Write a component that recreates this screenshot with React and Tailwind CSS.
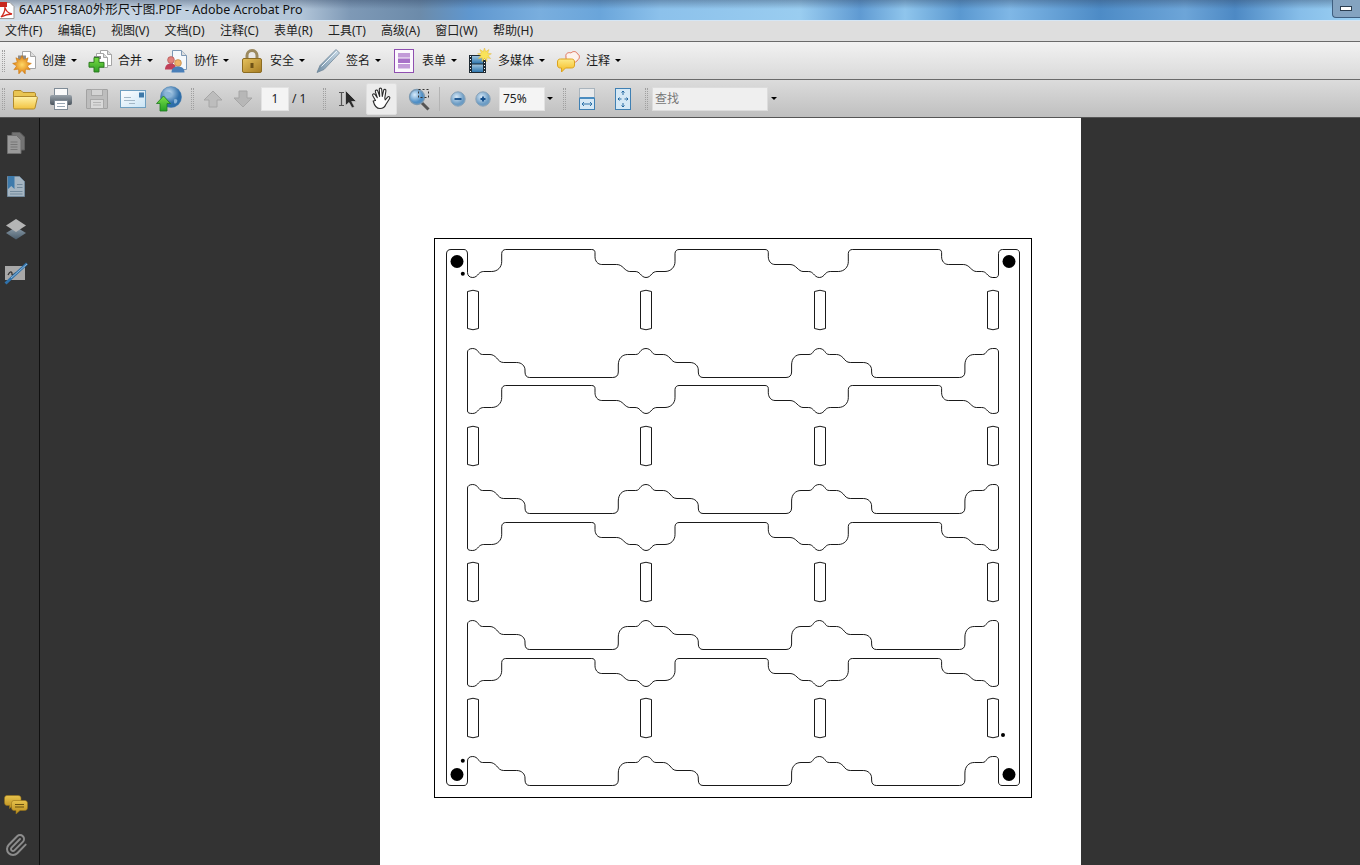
import React from "react";
import { Paperclip } from "lucide-react";

const Svg = ({ w, h, children }) => (
  <svg width={w} height={h} viewBox={`0 0 ${w} ${h}`} className="block shrink-0">{children}</svg>
);
const star = (cx, cy, r1, r2, n) => {
  const p = [];
  for (let i = 0; i < n * 2; i++) {
    const r = i % 2 ? r2 : r1;
    const t = (Math.PI * i) / n - Math.PI / 2;
    p.push(`${(cx + r * Math.cos(t)).toFixed(1)},${(cy + r * Math.sin(t)).toFixed(1)}`);
  }
  return p.join(" ");
};
const Doc = ({ x, y, w, h, f = 5, fill = "#fff", stroke = "#a5a5a5" }) => (
  <g>
    <path d={`M${x} ${y}h${w - f}l${f} ${f}v${h - f}h-${w}z`} fill={fill} stroke={stroke} />
    <path d={`M${x + w - f} ${y}v${f}h${f}`} fill="#ddd" stroke={stroke} />
  </g>
);

const Create = () => (
  <Svg w={24} h={26}>
    <defs><radialGradient id="sun1"><stop offset="0" stopColor="#ffd866" /><stop offset="1" stopColor="#dd7d10" /></radialGradient></defs>
    <Doc x={10.5} y={3.5} w={13} h={17} />
    <path d="M6 7.5h8v4H6z" fill="#8d8d8d" />
    <path d="M7 11v4" stroke="#8d8d8d" strokeWidth="2" />
    <polygon points={star(10, 17, 9.5, 5.5, 9)} fill="url(#sun1)" stroke="#c9760f" strokeWidth=".5" />
  </Svg>
);
const Merge = () => (
  <Svg w={24} h={26}>
    <defs><linearGradient id="gr1" x1="0" y1="0" x2="0" y2="1"><stop offset="0" stopColor="#79dd42" /><stop offset="1" stopColor="#2f9e26" /></linearGradient></defs>
    <Doc x={12.5} y={2.5} w={11} h={15} f={4} />
    <Doc x={8.5} y={5.5} w={11} h={14} f={4} />
    <path d="M6 8h7v3H6z" fill="#8d8d8d" />
    <path d="M7.5 11h5v5h5v5h-5v5h-5v-5h-5v-5h5z" fill="url(#gr1)" stroke="#2b7a1f" transform="translate(-1.5 -1) scale(1 .96)" />
  </Svg>
);
const Collab = () => (
  <Svg w={24} h={26}>
    <Doc x={8.5} y={2.5} w={14} h={19} fill="#f6f9fc" stroke="#7d98b5" />
    <circle cx="7" cy="12" r="3.4" fill="#e0807b" stroke="#a94a4a" strokeWidth=".6" />
    <path d="M1 21.5c0-4 2.5-6 6-6s5 2 5 6z" fill="#bf3f58" />
    <circle cx="14" cy="15" r="3.4" fill="#eeb36a" stroke="#b57a35" strokeWidth=".6" />
    <path d="M7.5 24.5c0-4 2.5-6 6.5-6s6.5 2 6.5 6z" fill="#4a7fb8" />
  </Svg>
);
const Lock = () => (
  <Svg w={24} h={26}>
    <defs><linearGradient id="gold" x1="0" y1="0" x2="1" y2="1"><stop offset="0" stopColor="#e6c25e" /><stop offset="1" stopColor="#a57b22" /></linearGradient></defs>
    <path d="M7 11V7.500a5 5 0 0 1 10 0V11" fill="none" stroke="#9c8a60" strokeWidth="3" />
    <rect x="2.500" y="10.500" width="19" height="14" rx="1.500" fill="url(#gold)" stroke="#8c6c22" />
    <rect x="10.500" y="15" width="3" height="5" fill="#6d5116" />
  </Svg>
);
const Pen = () => (
  <Svg w={24} h={26}>
    <defs><linearGradient id="penb" x1="0" y1="0" x2="1" y2="0"><stop offset="0" stopColor="#6f8ca3" /><stop offset="1" stopColor="#c9dbe8" /></linearGradient></defs>
    <path d="M20 1.500l3.500 3.500L8 21.500 1 24.500l3-7z" fill="url(#penb)" stroke="#6f8597" strokeWidth=".8" />
    <path d="M5.500 18.500 21 3" stroke="#edf4f9" />
  </Svg>
);
const Form = () => (
  <Svg w={24} h={26}>
    <rect x="2.500" y="1.500" width="19" height="23" fill="#fbf8fd" stroke="#8f4fb0" />
    <rect x="6" y="5" width="12" height="4.500" fill="#c29ad8" />
    <rect x="6" y="10.500" width="12" height="4.500" fill="#a871c8" />
    <rect x="6" y="16" width="12" height="4.500" fill="#c29ad8" />
  </Svg>
);
const Film = () => (
  <Svg w={24} h={26}>
    <defs><linearGradient id="fb" x1="0" y1="0" x2="0" y2="1"><stop offset="0" stopColor="#9fc6e0" /><stop offset="1" stopColor="#2f76ad" /></linearGradient></defs>
    <rect x="1" y="7" width="17" height="18" fill="#1e2a33" />
    <rect x="4" y="8" width="11" height="7.500" fill="url(#fb)" />
    <rect x="4" y="16.500" width="11" height="7.500" fill="url(#fb)" />
    <path d="M2 8.500h1M2 11.500h1M2 14.500h1M2 17.500h1M2 20.500h1M2 23.500h1M16 8.500h1M16 11.500h1M16 14.500h1M16 17.500h1M16 20.500h1M16 23.500h1" stroke="#fff" />
    <polygon points={star(16.5, 7, 7, 3.6, 9)} fill="#f9e35a" stroke="#e2b73a" strokeWidth=".5" />
  </Svg>
);
const Note = () => (
  <Svg w={24} h={26}>
    <defs><linearGradient id="yb" x1="0" y1="0" x2="0" y2="1"><stop offset="0" stopColor="#fdeb8a" /><stop offset="1" stopColor="#f4b91d" /></linearGradient></defs>
    <path d="M10 9c-1-4 3-5 5-4 2-2.500 6-1.500 6.500 1 2.500.5 2.500 5 0 6-1 3-5 2.500-6 1.500-3 1-6-1.500-5.500-4.500z" fill="#fdf2ec" stroke="#e0745c" />
    <path d="M4.500 11h11c2 0 3 1 3 3v3c0 2-1 3-3 3h-6l-4 4v-4h-1c-2 0-3-1-3-3v-3c0-2 1-3 3-3z" fill="url(#yb)" stroke="#dca21c" />
  </Svg>
);

const Folder = () => (
  <Svg w={26} h={24}>
    <defs><linearGradient id="fo" x1="0" y1="0" x2="0" y2="1"><stop offset="0" stopColor="#fff2a8" /><stop offset="1" stopColor="#f1c23f" /></linearGradient></defs>
    <path d="M1.500 5c0-1 .5-1.500 1.500-1.500h6l2 2h11c1 0 1.500.5 1.500 1.500v3h-22z" fill="#e9c552" stroke="#b08a2c" />
    <path d="M3 9.500h21c1 0 1.500.5 1.300 1.500l-2.300 10c-.2.800-.6 1-1.500 1H3c-1 0-1.500-.5-1.500-1.500V11c0-1 .5-1.500 1.500-1.500z" fill="url(#fo)" stroke="#b08a2c" />
  </Svg>
);
const Printer = () => (
  <Svg w={24} h={24}>
    <defs><linearGradient id="pr" x1="0" y1="0" x2="0" y2="1"><stop offset="0" stopColor="#9aa3ab" /><stop offset="1" stopColor="#4b555e" /></linearGradient></defs>
    <rect x="5.500" y="1.500" width="13" height="8" fill="#fafafa" stroke="#7f8b96" />
    <rect x="1" y="8" width="22" height="10" rx="2" fill="url(#pr)" />
    <rect x="5.500" y="13.500" width="13" height="9" fill="#fff" stroke="#7f8b96" />
    <path d="M8 16.500h8M8 19.500h8" stroke="#9aa8b5" />
  </Svg>
);
const Save = () => (
  <Svg w={24} h={24}>
    <path d="M2 2.500h20a.5.5 0 0 1 .5.500v18a.5.5 0 0 1-.5.500H2a.5.5 0 0 1-.5-.500V3a.5.5 0 0 1 .5-.500z" fill="#bdbdbd" stroke="#a2a2a2" />
    <rect x="6.500" y="2.500" width="11" height="6" fill="#d3d3d3" stroke="#a8a8a8" />
    <rect x="5.500" y="12.500" width="13" height="9" fill="#d9d9d9" stroke="#a8a8a8" />
    <path d="M8 15.500h8M8 18h8" stroke="#b4b4b4" />
  </Svg>
);
const Mail = () => (
  <Svg w={26} h={24}>
    <defs><linearGradient id="ml" x1="0" y1="0" x2="1" y2="1"><stop offset="0" stopColor="#ffffff" /><stop offset="1" stopColor="#c9e4f5" /></linearGradient></defs>
    <rect x=".5" y="3.500" width="25" height="17" fill="url(#ml)" stroke="#6f9fc0" />
    <rect x="19" y="5.500" width="5" height="5" fill="#3d78a8" />
    <path d="M4 10.500h7M4 13.500h11M9 16.500h6" stroke="#a3b7c6" />
  </Svg>
);
const Globe = () => (
  <Svg w={26} h={26}>
    <defs>
      <radialGradient id="gl" cx=".4" cy=".3"><stop offset="0" stopColor="#c5def2" /><stop offset="1" stopColor="#2e6da8" /></radialGradient>
      <linearGradient id="ga" x1="0" y1="0" x2="0" y2="1"><stop offset="0" stopColor="#7de14a" /><stop offset="1" stopColor="#24a024" /></linearGradient>
    </defs>
    <circle cx="15" cy="11" r="10.500" fill="url(#gl)" stroke="#3f79ad" strokeWidth=".5" />
    <path d="M9 6c3-1 6 0 7 2s-2 3-4 4-3-3-3-6zM19 13c2 0 3 1 2 3s-3 2-3 0 0-3 1-3z" fill="#8ab4d8" />
    <path d="M7 10l7 7.500h-3.500V25h-7v-7.500H0z" fill="url(#ga)" stroke="#1f7a1f" strokeWidth=".8" transform="translate(.5 0)" />
  </Svg>
);
const UpA = ({ d }) => (
  <Svg w={20} h={20}>
    <path d={d ? "M6 2h8v7h5l-9 9-9-9h5z" : "M10 2l9 9h-5v7H6v-7H1z"} fill={d ? "#b7b7b7" : "#bdbdbd"} stroke="#a6a6a6" />
  </Svg>
);
const Cursor = () => (
  <Svg w={20} h={22}>
    <path d="M2 4.500h5M2 17.500h5M4.500 4.500v13" stroke="#555" strokeWidth="1.200" fill="none" />
    <path d="M8.500 2.500v15l3.500-3 3 5.500 2.500-1.300-2.800-5.200h4.800z" fill="#2a2a2a" stroke="#d0d0d0" strokeWidth=".7" />
  </Svg>
);
const Hand = () => (
  <Svg w={24} h={24}>
    <path d="M5.500 13.500 2.800 8.800c-.9-1.700 1.200-2.700 2.200-1.300l2.300 3.200L5.400 4.800c-.5-1.800 1.800-2.500 2.400-.7l1.900 5.400-.4-7c-.1-1.900 2.300-1.900 2.400 0l.6 6.900 1.300-5.900c.4-1.800 2.600-1.300 2.300.5l-1.100 7 .4 2 2.400-2.800c1.300-1.500 3 0 1.900 1.500l-3.700 5.800c-1.100 2.900-2.900 4-5.800 4-3.600 0-5.400-2-6.800-7.500z" fill="#fff" stroke="#2a2a2a" strokeWidth="1.100" strokeLinejoin="round" />
  </Svg>
);
const Marquee = () => (
  <Svg w={23} h={24}>
    <defs><radialGradient id="lens" cx=".35" cy=".35"><stop offset="0" stopColor="#d8ebfa" /><stop offset="1" stopColor="#4f8fc6" /></radialGradient></defs>
    <path d="M13 15l7.500 7.500" stroke="#555" strokeWidth="3" />
    <circle cx="9" cy="10" r="7.500" fill="url(#lens)" stroke="#7c9ab3" strokeWidth="1.300" />
    <rect x="10.500" y="2.500" width="10" height="8" fill="none" stroke="#333" strokeDasharray="2 2" />
  </Svg>
);
const Zoomer = ({ id, plus }) => (
  <Svg w={16} h={16}>
    <defs><radialGradient id={id} cx=".4" cy=".35"><stop offset="0" stopColor="#d4e6f5" /><stop offset="1" stopColor="#6c9cc4" /></radialGradient></defs>
    <circle cx="8" cy="8" r="7.200" fill={`url(#${id})`} stroke="#8aa3b8" />
    {plus ? <path d="M5.500 8h5M8 5.500v5" stroke="#134d8a" strokeWidth="1.800" /> : <path d="M4.500 8h7" stroke="#134d8a" strokeWidth="1.800" />}
  </Svg>
);
const FitW = () => (
  <Svg w={16} h={22}>
    <rect x=".5" y=".5" width="15" height="10" fill="#e8eaec" stroke="#a9b4bd" />
    <rect x=".5" y="10.500" width="15" height="11" fill="#d6e8f5" stroke="#3f80b3" />
    <rect x=".5" y="9" width="15" height="2" fill="#4a8cc0" />
    <path d="M3 16h10M3 16l2-2M3 16l2 2M13 16l-2-2M13 16l-2 2" stroke="#2e72a8" fill="none" />
  </Svg>
);
const FitP = () => (
  <Svg w={16} h={22}>
    <rect x=".5" y=".5" width="15" height="21" fill="#d5e8f5" stroke="#3f80b3" />
    <path d="M8 3v4M6.500 4.500 8 3l1.500 1.500M8 19v-4M6.500 17.500 8 19l1.500-1.500M3 11h3.500M4.500 9.500 3 11l1.500 1.500M13 11H9.500M11.500 9.500 13 11l-1.500 1.500" stroke="#2468a0" fill="none" />
  </Svg>
);
const PdfIcon = () => (
  <Svg w={15} h={18}>
    <path d="M-3 1.500h13l4 4v12H-3z" fill="#fff" stroke="#9a9a9a" />
    <rect x="-3" y="1" width="10" height="5" fill="#c8281e" />
    <path d="M1 16c2-2 4-6 4-10 .5 3 3 6 7 7-3 0-7 1-11 3z" fill="none" stroke="#cf2a20" strokeWidth="1.300" />
  </Svg>
);

const Pages = () => (
  <Svg w={18} h={22}>
    <path d="M5 .5h8l4.500 4.500v13H5z" fill="#747474" stroke="#5f5f5f" />
    <path d="M.5 3.500h9l4.500 4.500v13.500H.5z" fill="#9a9a9a" stroke="#6f6f6f" />
    <path d="M3.500 10h7M3.500 12.500h7M3.500 15h7M3.500 17.500h7" stroke="#777" />
  </Svg>
);
const Bookmarks = () => (
  <Svg w={18} h={22}>
    <path d="M.5 1.500h12l5 5v15H.5z" fill="#a5b5c2" stroke="#72899c" />
    <path d="M1 1h6.500v13l-3.200-3-3.300 3z" fill="#3d7aab" />
    <path d="M10 9.500h5.500M10 12.500h5.500M3 16.500h12.500M3 19h12.500" stroke="#738a9c" />
  </Svg>
);
const Layers = () => (
  <Svg w={20} h={22}>
    <defs><linearGradient id="ly" x1="0" y1="0" x2="0" y2="1"><stop offset="0" stopColor="#8fa0ad" /><stop offset="1" stopColor="#4a5c6b" /></linearGradient></defs>
    <path d="M10 9l10 6-10 6.500L0 15z" fill="url(#ly)" />
    <path d="M10 1l10 6.500L10 14 0 7.500z" fill="#b5b5b5" />
  </Svg>
);
const Signs = () => (
  <Svg w={24} h={24}>
    <rect x="1" y="5" width="20" height="14" fill="#a8a8a8" />
    <path d="M4 14c2-4 4-4 4-1s3-2 5-1" stroke="#333" strokeWidth="1.300" fill="none" />
    <path d="M1.500 22.500 23 2.500" stroke="#2f72ab" strokeWidth="2.800" />
    <path d="M7 17 23 3" stroke="#a9c9e2" strokeWidth=".8" />
  </Svg>
);
const Comments = () => (
  <Svg w={24} h={20}>
    <defs><linearGradient id="cm" x1="0" y1="0" x2="0" y2="1"><stop offset="0" stopColor="#e6c24c" /><stop offset="1" stopColor="#b98c1c" /></linearGradient></defs>
    <path d="M3 .5h11c2 0 3 1 3 3v4c0 2-1 3-3 3H9l-3.500 3v-3H3c-1.500 0-2.500-1-2.500-3v-4c0-2 1-3 2.500-3z" fill="url(#cm)" stroke="#96721a" strokeWidth=".6" />
    <path d="M10 5.500h10.500c2 0 3 1 3 3v4c0 2-1 3-3 3H16l-4 3.500v-3.500h-2c-1.500 0-2.500-1-2.500-3v-4c0-2 1-3 2.500-3z" fill="url(#cm)" stroke="#96721a" strokeWidth=".6" />
    <path d="M11 9.500h9M11 12h9" stroke="#6b5210" />
  </Svg>
);

const fA = (c, o) => {
  const x = (v) => (c + v).toFixed(1);
  const y = (v) => v + o;
  return `C${x(3)},${y(277.5)} ${x(4.5)},${y(275.5)} ${x(6)},${y(273.8)} C${x(7)},${y(272.5)} ${x(9)},${y(271.5)} ${x(11)},${y(271.5)} H${x(19)} C${x(25)},${y(271.5)} ${x(29)},${y(267)} ${x(29)},${y(261.7)} V${y(253.5)} C${x(29)},${y(251)} ${x(31)},${y(249.5)} ${x(33)},${y(249.5)} H${x(119)} C${x(121)},${y(249.5)} ${x(122.3)},${y(250.5)} ${x(122.3)},${y(252.5)} V${y(256.7)} C${x(122.3)},${y(261)} ${x(125)},${y(264.5)} ${x(129)},${y(264.5)} H${x(144)} C${x(147)},${y(264.5)} ${x(149)},${y(266)} ${x(151)},${y(268)} C${x(153)},${y(270)} ${x(155)},${y(271.5)} ${x(157)},${y(271.5)} H${x(162.3)} C${x(165)},${y(271.5)} ${x(166)},${y(272.5)} ${x(167.3)},${y(273.8)} C${x(169)},${y(275.5)} ${x(170.5)},${y(277.5)} ${x(173.3)},${y(277.5)} `;
};
const fB = (c, o) => {
  const x = (v) => (c + v).toFixed(1);
  const y = (v) => v + o;
  return `C${x(2.5)},${y(348.5)} ${x(4.5)},${y(350)} ${x(5.7)},${y(351.7)} C${x(6.5)},${y(353)} ${x(7.5)},${y(354.5)} ${x(10)},${y(354.5)} H${x(17.3)} C${x(20)},${y(354.5)} ${x(22)},${y(356)} ${x(24)},${y(358)} C${x(26)},${y(360.5)} ${x(27.5)},${y(362.5)} ${x(31)},${y(362.5)} H${x(44)} C${x(49)},${y(362.5)} ${x(52.3)},${y(366)} ${x(52.3)},${y(370)} V${y(372)} C${x(52.3)},${y(375.5)} ${x(54)},${y(377.5)} ${x(57)},${y(377.5)} H${x(140)} C${x(143.5)},${y(377.5)} ${x(145.6)},${y(375.5)} ${x(145.6)},${y(372)} V${y(365)} C${x(145.6)},${y(358.5)} ${x(149.5)},${y(354.5)} ${x(155)},${y(354.5)} H${x(163)} C${x(165.5)},${y(354.5)} ${x(166.5)},${y(353)} ${x(167.3)},${y(351.7)} C${x(168.5)},${y(350)} ${x(170.5)},${y(348.5)} ${x(173.3)},${y(348.5)} `;
};
const C0 = 472.7;
const tri = (f, o) => f(C0, o) + f(C0 + 173.3, o) + f(C0 + 346.6, o);
const outer =
  `M467.5,254 C467.5,251 466,249.5 464,249.5 H451 C448,249.5 446.5,251 446.5,254 V781 C446.5,784 448,785.5 451,785.5 H464 C466,785.5 467.5,784 467.5,781 V761 C467.5,758 469.5,756.5 ${C0},756.5 ` +
  tri(fB, 408) +
  `H995 C997,756.5 998.5,758 998.5,760 V782 C998.5,784 1000,785.5 1002,785.5 H1016 C1018,785.5 1019.5,784 1019.5,782 V253 C1019.5,251 1018,249.5 1016,249.5 H1002.5 C1000.5,249.5 998.5,251 998.5,253.5 V274 C998.5,276 997.5,277.5 995.5,277.5 H992.6 `;
const topRow = `M467.5,254 V272.5 C467.5,275.5 469.5,277.5 ${C0},277.5 ` + tri(fA, 0) + `H995.5`;
const bands = [[0, 136], [136, 273], [272, 409]].map(
  ([o, l]) => {
    const e = l - 136;
    return (
      `M467.5,${352 + o} C467.5,${350 + o} 469.5,${348.5 + o} ${C0},${348.5 + o} ` +
      tri(fB, o) +
      `H995 C997,${348.5 + o} 998.5,${350 + o} 998.5,${352 + o} V${411 + e} C998.5,${413 + e} 996,${413.5 + e} 992.6,${413.5 + e} ` +
      `M467.5,${352 + o} V${411 + e} C467.5,${413 + e} 469.5,${413.5 + e} ${C0},${413.5 + e} ` +
      tri(fA, l - 136 + 136)
    );
  }
);
const slots = [];
[290, 426, 562, 698].forEach((y) =>
  [467.5, 640.5, 814.5, 987.5].forEach((x) =>
    slots.push(`M${x},${y + 1.5} Q${x + 5.5},${y - 1} ${x + 11},${y + 1.5} V${y + 38.5} Q${x + 5.5},${y + 41} ${x},${y + 38.5} Z`)
  )
);

const Caret = () => (
  <span className="block w-0 h-0 shrink-0 border-l-[3px] border-r-[3px] border-t-[3px] border-l-transparent border-r-transparent border-t-black" />
);
const Grip = ({ c = "" }) => (
  <span className={`block w-[3px] h-[22px] shrink-0 border-l border-r border-dotted border-[#a0a0a0] ${c}`} />
);
const Tool = ({ icon, label }) => (
  <div className="flex items-center">
    <span className="flex w-6 justify-center mr-[6px]">{icon}</span>
    <span className="text-[12px] leading-none text-[#1a1a1a] mr-[5px]">{label}</span>
    <Caret />
  </div>
);

const menus = ["文件(F)", "编辑(E)", "视图(V)", "文档(D)", "注释(C)", "表单(R)", "工具(T)", "高级(A)", "窗口(W)", "帮助(H)"];
const cjk = "font-['Noto_Sans','Noto_Sans_CJK_SC',sans-serif]";

export default function App() {
  return (
    <div className={`flex flex-col w-[1360px] h-[865px] overflow-hidden bg-[#333333] ${cjk}`}>
      <div className="flex justify-between h-[21px] shrink-0 border-b border-[#d5e6f5] bg-[linear-gradient(180deg,rgba(50,70,100,.4)_0%,rgba(50,70,100,0)_45%),linear-gradient(90deg,#d2dbe4_0%,#c4d3e2_150px,#b3c6d9_300px,#7e99b6_350px,#6c8baa_420px,#5f97cf_470px,#79aede_540px,#6aa5da_600px,#8cc1eb_660px,#9acdf0_800px,#5f9ad2_860px,#8fc5ec_905px,#5a98d0_960px,#7fb7e6_1010px,#4d8bc6_1100px,#6da5d8_1185px,#4d89c4_1235px,#87bee9_1300px,#9ed3f5_1360px)]">
        <div className="flex items-center">
          <PdfIcon />
          <span className="ml-[4px] text-[12.5px] leading-none text-[#111]">6AAP51F8A0外形尺寸图.PDF - Adobe Acrobat Pro</span>
        </div>
        <div className="flex items-center justify-center w-[28px] h-[18px] border-l border-b border-[#3f5f80] rounded-bl-[4px] bg-[#84a3c0]">
          <span className="block w-[12px] h-[5px] ml-[-2px] bg-white border border-[#2c3e50]" />
        </div>
      </div>
      <div className="flex items-center gap-[15.3px] h-[20px] shrink-0 pl-[5px] bg-[#dedede] text-[12px] leading-none text-[#222]">
        {menus.map((m) => (<span key={m}>{m}</span>))}
      </div>
      <div className="flex items-center h-[38px] shrink-0 border-t border-[#6a6a6a] bg-[linear-gradient(180deg,#f2f2f2,#d9d9d9)]">
        <Grip c="ml-[2px] mr-[7px]" />
        <div className="flex items-center gap-[11px]">
          <Tool icon={<Create />} label="创建" />
          <Tool icon={<Merge />} label="合并" />
          <Tool icon={<Collab />} label="协作" />
          <Tool icon={<Lock />} label="安全" />
          <Tool icon={<Pen />} label="签名" />
          <Tool icon={<Form />} label="表单" />
          <Tool icon={<Film />} label="多媒体" />
          <Tool icon={<Note />} label="注释" />
        </div>
      </div>
      <div className="flex items-center h-[38px] shrink-0 border-t border-[#6a6a6a] bg-[linear-gradient(180deg,#dcdcdc,#bfbfbf)]">
        <Grip c="ml-[2px]" />
        <span className="ml-[7px]"><Folder /></span>
        <span className="ml-[11px]"><Printer /></span>
        <span className="ml-[12px]"><Save /></span>
        <span className="ml-[11px]"><Mail /></span>
        <span className="ml-[10px]"><Globe /></span>
        <Grip c="ml-[9px]" />
        <span className="ml-[9px]"><UpA /></span>
        <span className="ml-[10px]"><UpA d /></span>
        <div className="ml-[8px] flex items-center justify-center w-[28px] h-[24px] bg-[#f4f4f4] border border-[#e2e2e2] text-[12px] leading-none text-[#222]">1</div>
        <span className="ml-[3px] w-[14px] text-[12px] leading-none text-[#222] whitespace-nowrap">/ 1</span>
        <Grip c="ml-[17px]" />
        <span className="ml-[11px]"><Cursor /></span>
        <div className="ml-[9px] flex items-center justify-center w-[31px] h-[32px] rounded-[2px] bg-[#ececec] border border-[#dfdfdf]"><Hand /></div>
        <span className="ml-[11px]"><Marquee /></span>
        <span className="block ml-[8px] w-px h-[24px] bg-[#b4b4b4]" />
        <span className="ml-[10px]"><Zoomer id="zm" /></span>
        <span className="ml-[9px]"><Zoomer id="zp" plus /></span>
        <div className="ml-[8px] flex items-center pl-[3px] w-[46px] h-[24px] bg-[#f4f4f4] border border-[#e2e2e2] text-[12px] leading-none text-[#222]">75%</div>
        <span className="ml-[2px]"><Caret /></span>
        <Grip c="ml-[10px]" />
        <span className="ml-[13px]"><FitW /></span>
        <span className="ml-[20px]"><FitP /></span>
        <Grip c="ml-[14px]" />
        <div className="ml-[4px] flex items-center pl-[2px] w-[116px] h-[24px] bg-[#efefef] border border-[#dcdcdc] text-[12px] leading-none text-[#777]">查找</div>
        <span className="ml-[3px]"><Caret /></span>
      </div>
      <div className="flex flex-1 min-h-0 border-t border-[#555]">
        <div className="flex flex-col items-center w-[40px] shrink-0 pr-[7px] pt-[14px] pb-[8px] border-r border-[#101010] bg-[#333333]">
          <div className="flex flex-col items-center gap-[21px]">
            <Pages />
            <Bookmarks />
            <Layers />
            <Signs />
          </div>
          <div className="flex flex-col items-center gap-[18px] mt-auto">
            <Comments />
            <Paperclip size={24} color="#8c8c8c" strokeWidth={2} />
          </div>
        </div>
        <div className="w-[701px] ml-[340px] shrink-0 bg-white">
          <svg width="701" height="747" viewBox="380 118 701 747" className="block">
            <rect x="434.5" y="238.5" width="597" height="559" fill="none" stroke="#000" />
            <g fill="none" stroke="#000" strokeWidth=".9">
              <path d={outer} />
              <path d={topRow} />
              {bands.map((d, i) => (<path key={i} d={d} />))}
              {slots.map((d, i) => (<path key={i} d={d} />))}
            </g>
            <g fill="#000">
              <circle cx="457" cy="261.500" r="6.500" />
              <circle cx="1009" cy="261.500" r="6.500" />
              <circle cx="457" cy="774.500" r="6.500" />
              <circle cx="1009" cy="774.500" r="6.500" />
              <circle cx="462.800" cy="273.700" r="2" />
              <circle cx="462.800" cy="760.700" r="2" />
              <circle cx="1003" cy="735" r="2" />
            </g>
          </svg>
        </div>
      </div>
    </div>
  );
}
